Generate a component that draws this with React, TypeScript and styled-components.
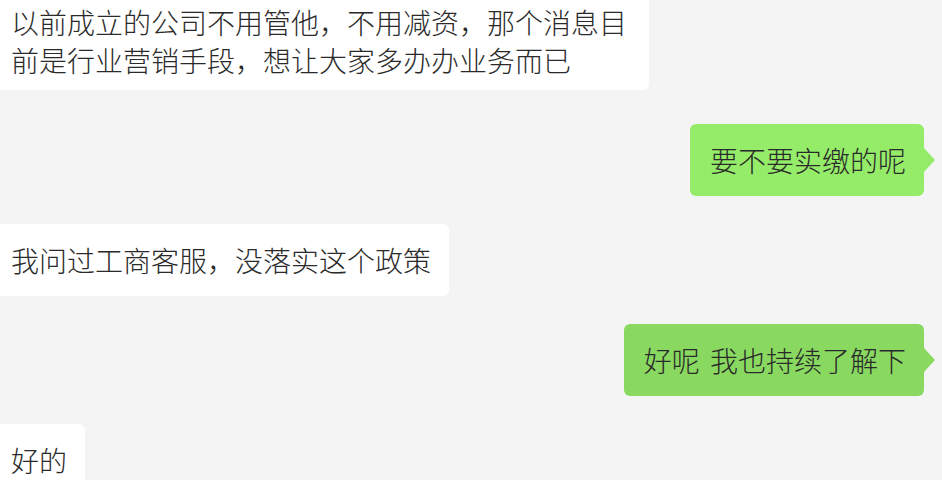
import styled, { createGlobalStyle } from "styled-components";

interface Message {
  id: number;
  mine: boolean;
  text: string;
}

const messages: Message[] = [
  { id: 1, mine: false, text: "以前成立的公司不用管他，不用减资，那个消息目前是行业营销手段，想让大家多办办业务而已" },
  { id: 2, mine: true, text: "要不要实缴的呢" },
  { id: 3, mine: false, text: "我问过工商客服，没落实这个政策" },
  { id: 4, mine: true, text: "好呢 我也持续了解下" },
  { id: 5, mine: false, text: "好的" },
];

const GlobalStyle = createGlobalStyle`
  html, body {
    margin: 0;
    padding: 0;
    background: #ffffff;
  }
  body {
    font-family: "Noto Sans CJK SC", "Noto Sans", sans-serif;
  }
`;

const App = (): JSX.Element => {
  return (
    <>
      <GlobalStyle />
      <ChatWindow>
        <MessageList>
          {messages.map((item, index) => (
            <Row key={item.id} $mine={item.mine} $first={index === 0}>
              <Bubble $mine={item.mine} $first={index === 0} $active={item.id === 4}>
                {item.text}
              </Bubble>
            </Row>
          ))}
        </MessageList>
      </ChatWindow>
    </>
  );
};

const ChatWindow = styled.div`
  width: 942px;
  height: 480px;
  background: #f4f4f4;
  overflow: hidden;
`;

const MessageList = styled.div`
  display: flex;
  flex-direction: column;
  gap: 28px;
  margin-top: -14px;
`;

const Row = styled.div<{ $mine: boolean; $first: boolean }>`
  display: flex;
  justify-content: ${(p) => (p.$mine ? "flex-end" : "flex-start")};
  padding-right: ${(p) => (p.$mine ? "18px" : "0")};
  margin-left: ${(p) => (p.$mine ? "0" : "-9px")};
  margin-bottom: ${(p) => (p.$first ? "6px" : "0")};
`;

const Bubble = styled.div<{ $mine: boolean; $first: boolean; $active: boolean }>`
  position: relative;
  max-width: 620px;
  padding: 17px 18px ${(p) => (p.$first ? "11px" : "17px")} 20px;
  border-radius: 6px;
  font-size: 28px;
  font-weight: 300;
  line-height: 38px;
  word-spacing: 4px;
  color: #2a2a2a;
  white-space: pre-wrap;
  background: ${(p) => (p.$mine ? (p.$active ? "#89d961" : "#95ec69") : "#ffffff")};

  &::after {
    content: "";
    display: ${(p) => (p.$mine ? "block" : "none")};
    position: absolute;
    right: -11px;
    top: 50%;
    margin-top: -12px;
    border-style: solid;
    border-width: 12px 0 12px 11px;
    border-color: transparent transparent transparent
      ${(p) => (p.$active ? "#89d961" : "#95ec69")};
  }
`;

export default App;
